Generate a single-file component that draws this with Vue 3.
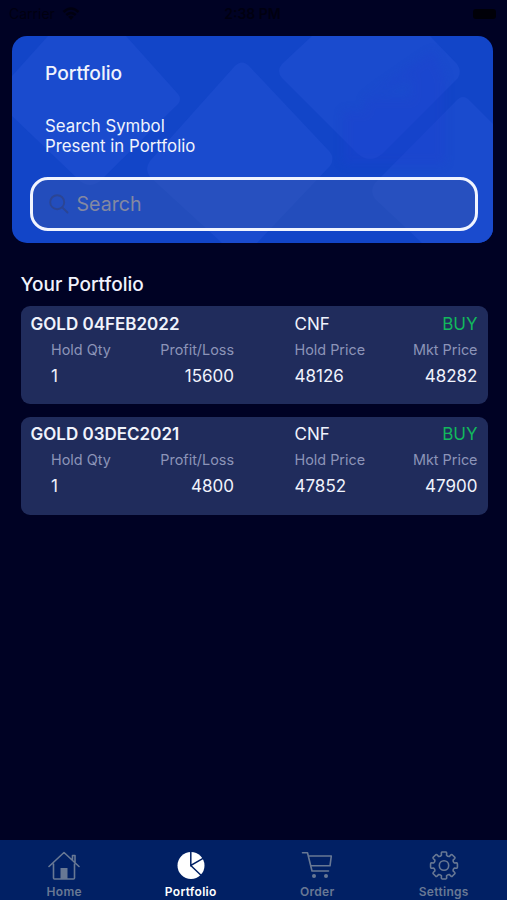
<template>
  <div class="screen">
    <div class="statusBar">
      <div class="carrier">
        <span>Carrier</span>
        <svg width="18" height="14" viewBox="0 0 18 14">
          <path
            d="M1.5 5 Q9 -2 16.5 5 M4.3 8 Q9 3.8 13.7 8"
            fill="none"
            stroke="currentColor"
            stroke-width="2.4"
          />
          <path d="M6.2 9.8 Q9 7.6 11.8 9.8 L9 13 Z" fill="currentColor" />
        </svg>
      </div>
      <span class="time">2:38 PM</span>
      <div class="battery"></div>
    </div>

    <header class="banner">
      <svg class="pattern" viewBox="0 0 481 207" preserveAspectRatio="none">
        <g fill="#1a4bce">
          <path d="M36 0 H114 L166 58 Q170 63 166 68 L88 145 Q78 153 68 145 L0 80 V40 Z" />
          <path d="M222 31 Q230 22 238 31 L318 116 Q323 123 318 130 L245 207 H210 L138 141 Q132 133 138 125 Z" />
          <path d="M300 0 H418 L445 28 Q450 35 446 42 L370 118 Q358 128 346 118 L270 42 Q264 35 270 28 Z" />
          <path d="M444 65 Q451 57 458 65 L481 88 V207 H410 L363 163 Q357 155 363 147 Z" />
        </g>
        <g class="chart">
          <rect x="331" y="75" width="22" height="53" />
          <rect x="353" y="62" width="46" height="66" />
          <rect x="399" y="42" width="34" height="86" />
          <path d="M353 62 L421 15 L433 42 H399 Z" />
        </g>
      </svg>
      <h1>Portfolio</h1>
      <p>Search Symbol<br />Present in Portfolio</p>
      <label class="searchBox">
        <svg width="20" height="20" viewBox="0 0 20 20">
          <circle cx="8.2" cy="8.2" r="7" />
          <path d="M13.3 13.3 L18.5 18.5" />
        </svg>
        <input v-model="search" type="text" placeholder="Search" />
      </label>
    </header>

    <main>
      <h2>Your Portfolio</h2>
      <div v-for="item in filtered" :key="item.symbol" class="card">
        <div class="cardHeader">
          <span class="symbol">{{ item.symbol }}</span>
          <span>{{ item.status }}</span>
          <span class="side">{{ item.side }}</span>
        </div>
        <div class="cardBody labels">
          <span>Hold Qty</span>
          <span class="right">Profit/Loss</span>
          <span class="price">Hold Price</span>
          <span class="right">Mkt Price</span>
        </div>
        <div class="cardBody values">
          <span>{{ item.qty }}</span>
          <span class="right">{{ item.profit }}</span>
          <span class="price">{{ item.holdPrice }}</span>
          <span class="right">{{ item.mktPrice }}</span>
        </div>
      </div>
    </main>

    <nav>
      <a class="tab">
        <svg width="32" height="30" viewBox="0 0 32 30">
          <path
            d="M1 15.5 L16 1.5 L31 15.5 M24.5 8.5 V4.5 H27 V11.5 M5.5 13 V27 Q5.5 28 6.5 28 H25.5 Q26.5 28 26.5 27 V13"
            class="line"
          />
          <path d="M12.5 17 H19.5 V28 H12.5 Z" fill="currentColor" />
        </svg>
        <span>Home</span>
      </a>
      <a class="tab active">
        <svg width="32" height="30" viewBox="0 0 32 30">
          <circle cx="16" cy="14.5" r="13.5" fill="currentColor" />
          <path d="M15.8 0 V14.5 L28.5 7.2 M15.8 14.5 L26 24.2" class="cut" />
        </svg>
        <span>Portfolio</span>
      </a>
      <a class="tab">
        <svg width="32" height="30" viewBox="0 0 32 30">
          <path
            d="M1.5 1.8 H6.5 L11 20 H27.5 M7.7 5 H30.3 L29 14.8 H10"
            class="line"
          />
          <circle cx="13" cy="25" r="2" fill="currentColor" />
          <circle cx="25" cy="25" r="2" fill="currentColor" />
        </svg>
        <span>Order</span>
      </a>
      <a class="tab">
        <svg width="32" height="30" viewBox="0 0 32 30">
          <path :d="gearPath" class="line" />
          <circle cx="16" cy="14.5" r="4.7" class="line" />
        </svg>
        <span>Settings</span>
      </a>
    </nav>
  </div>
</template>

<script setup>
import { computed, ref } from 'vue'

const search = ref('')

const holdings = [
  {
    symbol: 'GOLD 04FEB2022',
    status: 'CNF',
    side: 'BUY',
    qty: 1,
    profit: 15600,
    holdPrice: 48126,
    mktPrice: 48282,
  },
  {
    symbol: 'GOLD 03DEC2021',
    status: 'CNF',
    side: 'BUY',
    qty: 1,
    profit: 4800,
    holdPrice: 47852,
    mktPrice: 47900,
  },
]

const filtered = computed(() =>
  holdings.filter((h) =>
    h.symbol.toLowerCase().includes(search.value.toLowerCase())
  )
)

// eight rounded teeth around the center of the settings icon
const point = (radius, deg) => {
  const a = (deg * Math.PI) / 180
  return `${(16 + radius * Math.cos(a)).toFixed(2)} ${(14.5 + radius * Math.sin(a)).toFixed(2)}`
}

const gearPath =
  Array.from({ length: 8 }, (_, i) => {
    const d = i * 45
    return `${i ? 'L' : 'M'}${point(10.6, d - 14)} L${point(12.9, d - 12)} Q${point(13.8, d - 10)} ${point(13.5, d - 6)} L${point(13.5, d + 6)} Q${point(13.8, d + 10)} ${point(12.9, d + 12)} L${point(10.6, d + 14)} Q${point(9.6, d + 22.5)} ${point(10.6, d + 31)}`
  }).join(' ') + ' Z'
</script>

<style>
body {
  margin: 0;
  background-color: #000224;
}
</style>

<style scoped>
.screen {
  width: 100%;
  height: 100vh;
  display: flex;
  flex-direction: column;
  box-sizing: border-box;
  background-color: #000224;
  color: #f0f3fc;
  font-family: Inter, 'Liberation Sans', sans-serif;
  overflow: hidden;
}

.statusBar {
  height: 35px;
  display: grid;
  grid-template-columns: 1fr auto 1fr;
  align-items: center;
  box-sizing: border-box;
  padding: 0 11px 8px 9px;
  font-size: 14px;
  color: #000010;
}

.carrier {
  display: flex;
  align-items: center;
  gap: 7px;
}

.time {
  font-weight: 600;
}

.battery {
  justify-self: end;
  width: 23px;
  height: 10px;
  border-radius: 3px;
  background-color: #000008;
}

.banner {
  position: relative;
  height: 207px;
  flex: none;
  box-sizing: border-box;
  margin: 0.5px 14px 0 12px;
  padding: 25.5px 15px 0 18px;
  border-radius: 15px;
  background-color: #1245c8;
  overflow: hidden;
}

.pattern {
  position: absolute;
  inset: 0;
  width: 100%;
  height: 100%;
}

.chart {
  fill: #1f3fd0;
  opacity: 0.35;
  filter: blur(5px);
}

h1,
h2,
p {
  margin: 0;
  font-weight: 500;
}

h1 {
  position: relative;
  padding-left: 15px;
  font-size: 19.2px;
  line-height: 24px;
}

p {
  position: relative;
  margin-top: 30.5px;
  padding-left: 15px;
  font-size: 16.8px;
  line-height: 20.5px;
  font-weight: 400;
}

.searchBox {
  position: relative;
  display: flex;
  align-items: center;
  gap: 7.5px;
  height: 54px;
  box-sizing: border-box;
  margin-top: 20px;
  padding: 0 16px;
  border: 3px solid #f0f4ff;
  border-radius: 18px;
  background-color: rgba(52, 86, 176, 0.5);
}

.searchBox svg {
  fill: none;
  stroke: #2b4594;
  stroke-width: 1.9;
  stroke-linecap: round;
}

input {
  flex: 1;
  min-width: 0;
  padding: 0;
  border: none;
  outline: none;
  background-color: transparent;
  font-family: inherit;
  font-size: 19.6px;
  color: #f0f3fc;
}

input::placeholder {
  color: #8388a2;
  opacity: 1;
}

main {
  flex: 1;
  padding: 30px 19.5px 0 20.5px;
}

h2 {
  margin-bottom: 9.5px;
  font-size: 19px;
  line-height: 24px;
}

.card {
  height: 98px;
  box-sizing: border-box;
  margin-bottom: 12.5px;
  padding: 5.6px 10px 0;
  border-radius: 9px;
  background-color: #202c5c;
}

.cardHeader {
  display: grid;
  grid-template-columns: 264px 1fr auto;
  font-size: 17px;
  line-height: 25px;
}

.symbol {
  font-weight: 600;
}

.side {
  color: #12b85c;
}

.cardBody {
  display: grid;
  grid-template-columns: 91px 92px 1fr 91px;
  padding-left: 20.5px;
  line-height: 26px;
}

.labels {
  font-size: 14.4px;
  color: #8c94b8;
}

.values {
  font-size: 17px;
}

.right {
  text-align: right;
}

.price {
  padding-left: 60.5px;
}

nav {
  display: flex;
  height: 60px;
  flex: none;
  box-sizing: border-box;
  padding-left: 1px;
  background-color: #012064;
}

.tab {
  flex: 1;
  display: flex;
  flex-direction: column;
  align-items: center;
  padding-top: 11px;
  color: #687894;
}

.tab span {
  margin-top: 2px;
  font-size: 12px;
  font-weight: 600;
  line-height: 17px;
  letter-spacing: 0.3px;
}

.active {
  color: #ffffff;
}

.line {
  fill: none;
  stroke: currentColor;
  stroke-width: 1.6;
  stroke-linejoin: round;
  stroke-linecap: round;
}

.cut {
  fill: none;
  stroke: #012064;
  stroke-width: 1.5;
}
</style>
